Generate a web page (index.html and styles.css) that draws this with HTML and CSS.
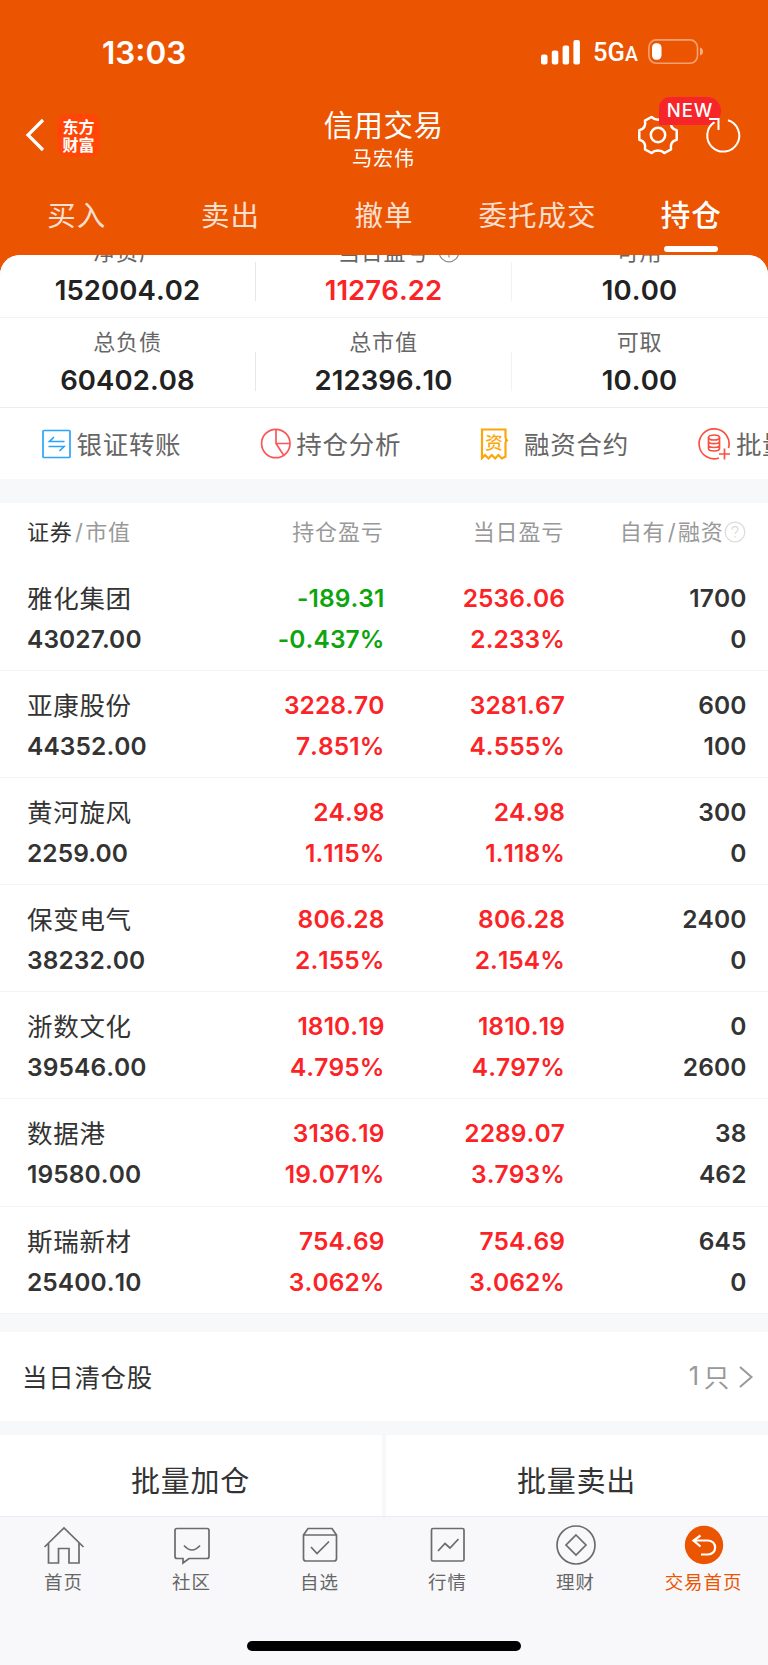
FILE: index.html
```html
<!DOCTYPE html>
<html lang="zh-CN">
<head>
<meta charset="utf-8">
<title>信用交易</title>
<link rel="stylesheet" href="styles.css">
</head>
<body>
<header class="top">
  <div class="status">
    <span class="time">13:03</span>
    <span class="status-right">
      <svg class="signal" width="40" height="25" viewBox="0 0 40 25" fill="#fff"><rect x="0" y="14.5" width="6.5" height="10" rx="2"/><rect x="10.8" y="10.5" width="6.5" height="14" rx="2"/><rect x="21.6" y="5.5" width="6.5" height="19" rx="2"/><rect x="32.4" y="0" width="6.5" height="24.5" rx="2"/></svg>
      <span class="net">5G<small>A</small></span>
      <svg class="battery" width="56" height="26" viewBox="0 0 56 26"><rect x=".9" y=".9" width="48.6" height="23.4" rx="7.5" fill="none" stroke="#fff" stroke-opacity=".45" stroke-width="1.6"/><path d="M52 8.5c2.6.8 3 2.4 3 4s-.4 3.200-3 4z" fill="#fff" fill-opacity=".5"/><rect x="4" y="4.300" width="9.500" height="16.500" rx="4.200" fill="#fff"/></svg>
    </span>
  </div>
  <div class="nav">
    <div class="nav-left">
      <svg width="20" height="34" viewBox="0 0 20 34" fill="none" stroke="#fff" stroke-width="3.200"><path d="M18 2L3 17l15 15"/></svg>
      <div class="logo"><span>东方</span><span>财富</span></div>
    </div>
    <div class="nav-title"><h1>信用交易</h1><p>马宏伟</p></div>
    <div class="nav-right">
      <svg class="gear" width="42" height="42" viewBox="-21 -21 42 42" fill="none" stroke="#fff" stroke-width="2.500" stroke-linejoin="round"><path d="M-6.500-18C-3-14.500 3-14.500 6.500-18L13-14.300C12-9 14-6 18.700-4.800V4.800C14 6 12 9 13 14.300L6.500 18C3 14.500-3 14.500-6.500 18L-13 14.300C-12 9-14 6-18.700 4.800V-4.800C-14-6-12-9-13-14.300Z"/><circle r="7.200"/></svg>
      <span class="badge">NEW</span>
      <svg class="refresh" width="40" height="40" viewBox="0 0 40 40" fill="none" stroke="#fff" stroke-width="2"><path d="M24 5.300A16 16 0 1 1 10.500 7.200"/><path d="M5 4H14.500V15"/></svg>
    </div>
  </div>
  <nav class="tabs"><a>买入</a><a>卖出</a><a>撤单</a><a>委托成交</a><a class="on">持仓</a></nav>
</header>

<main class="panel">
  <section class="summary">
    <div class="srow first">
      <div class="cell"><label>净资产</label><b>152004.02</b></div>
      <div class="cell"><label class="tip">当日盈亏<svg width="22" height="22" viewBox="0 0 22 22" fill="none" stroke="#888" stroke-width="1.200"><circle cx="11" cy="11" r="9.800"/><path d="M11 9.500v7M11 5v2"/></svg></label><b class="up">11276.22</b></div>
      <div class="cell"><label>可用</label><b>10.00</b></div>
    </div>
    <div class="srow">
      <div class="cell"><label>总负债</label><b>60402.08</b></div>
      <div class="cell"><label>总市值</label><b>212396.10</b></div>
      <div class="cell"><label>可取</label><b>10.00</b></div>
    </div>
  </section>
  <section class="tools">
    <div class="tool"><svg width="30" height="32" viewBox="0 0 30 32" fill="none" stroke="#2ba4fb" stroke-width="1.700"><rect x="1" y="2.500" width="27" height="27" rx="1"/><path d="M22.500 13.500H7.500l4.500-4.500M6.500 18.500h15.500l-4.500 4.500"/></svg><span>银证转账</span></div>
    <div class="tool"><svg width="31" height="32" viewBox="-1 0 31 32" fill="none" stroke="#fb5558" stroke-width="1.700"><circle cx="14.800" cy="15.500" r="14.200"/><path d="M15 1.500v14h14M15 15.500l7.500 11.500"/></svg><span>持仓分析</span></div>
    <div class="tool"><svg class="contract" width="30" height="34" viewBox="-1 0 30 34"><path d="M25.500 11V2.500H2V31l3-3 3.500 3.500 3.300-3.500 3.300 3.500 3.300-3.500 3.400 3.500 3.700-2V15" fill="none" stroke="#fba60a" stroke-width="2.200"/><path d="M25 9l3.500 4.500-3.500 3z" fill="#fba60a"/><text x="14" y="21.500" text-anchor="middle" class="zi">资</text></svg><span>融资合约</span></div>
    <div class="tool"><svg width="33" height="34" viewBox="0 0 33 34" fill="none" stroke="#fb5040" stroke-width="1.700"><path d="M21 31A15 15 0 1 1 30.500 21"/><ellipse cx="16" cy="10.500" rx="5.500" ry="2.500"/><path d="M10.500 10.500v11c0 3.300 11 3.300 11 0v-11M10.500 14.200c0 3.300 11 3.300 11 0M10.500 18c0 3.300 11 3.300 11 0M26.500 21.500v11M21 27h11"/></svg><span>批量交易</span></div>
  </section>

  <section class="holdings">
    <div class="thead"><div><em>证券</em><i>/</i>市值</div><div>持仓盈亏</div><div>当日盈亏</div><div class="own">自有<i>/</i>融资<svg width="22" height="22" viewBox="0 0 22 22" fill="none" stroke="#ddd" stroke-width="1.300"><circle cx="11" cy="11" r="9.800"/><path d="M8 8.500C8 4.500 14 4.500 14 8.500c0 2-3 2.500-3 4.500M11 15v1.500"/></svg></div></div>
    <div class="row"><div><span class="name">雅化集团</span><b class="kern">43027.00</b></div><div class="down"><b>-189.31</b><b>-0.437%</b></div><div class="up"><b>2536.06</b><b>2.233%</b></div><div><b>1700</b><b>0</b></div></div>
    <div class="row"><div><span class="name">亚康股份</span><b>44352.00</b></div><div class="up"><b>3228.70</b><b>7.851%</b></div><div class="up"><b>3281.67</b><b>4.555%</b></div><div><b>600</b><b>100</b></div></div>
    <div class="row"><div><span class="name">黄河旋风</span><b class="kern">2259.00</b></div><div class="up"><b>24.98</b><b>1.115%</b></div><div class="up"><b>24.98</b><b>1.118%</b></div><div><b>300</b><b>0</b></div></div>
    <div class="row"><div><span class="name">保变电气</span><b>38232.00</b></div><div class="up"><b>806.28</b><b>2.155%</b></div><div class="up"><b>806.28</b><b>2.154%</b></div><div><b>2400</b><b>0</b></div></div>
    <div class="row"><div><span class="name">浙数文化</span><b>39546.00</b></div><div class="up"><b>1810.19</b><b>4.795%</b></div><div class="up"><b>1810.19</b><b>4.797%</b></div><div><b>0</b><b>2600</b></div></div>
    <div class="row"><div><span class="name">数据港</span><b>19580.00</b></div><div class="up"><b>3136.19</b><b>19.071%</b></div><div class="up"><b>2289.07</b><b>3.793%</b></div><div><b>38</b><b>462</b></div></div>
    <div class="row"><div><span class="name">斯瑞新材</span><b>25400.10</b></div><div class="up"><b>754.69</b><b>3.062%</b></div><div class="up"><b>754.69</b><b>3.062%</b></div><div><b>645</b><b>0</b></div></div>
  </section>

  <section class="cleared"><span>当日清仓股</span><span class="count"><span class="n">1</span>只<svg width="16" height="24" viewBox="0 0 16 24" fill="none" stroke="#999" stroke-width="2"><path d="M2 2l11.500 10L2 22"/></svg></span></section>
  <section class="actions"><button>批量加仓</button><button>批量卖出</button></section>
</main>

<footer class="bottom">
  <div class="tabbar">
    <a><svg viewBox="-21 -21 42 42"><path d="M-19.500 2L0-17 19.500 2M-15.500-2V18H-5.500V3.500H5V18H15V-2"/></svg><span>首页</span></a>
    <a><svg viewBox="-21 -21 42 42"><path d="M-15-16.500H15Q17-16.500 17-14.500V11.500Q17 13.500 15 13.500H-3L-9 18V13.500H-15Q-17 13.500-17 11.500V-14.500Q-17-16.500-15-16.500ZM-8 .500Q0 9.500 8 .500"/></svg><span>社区</span></a>
    <a><svg viewBox="-21 -21 42 42"><path d="M-16.500-10L-12-16.500H12L16.500-10V13.500Q16.500 16 14 16H-14Q-16.500 16-16.500 13.500ZM-16.500-10H16.500M-9 2L-3 8.500 9-3.500"/></svg><span>自选</span></a>
    <a><svg viewBox="-21 -21 42 42"><rect x="-16.500" y="-16.500" width="32.500" height="32.500" rx="1.500"/><path d="M-10 6L-3-1.500 2 3 10.500-6"/></svg><span>行情</span></a>
    <a><svg viewBox="-21 -21 42 42"><circle r="19"/><path d="M0-10L10 0 0 10-10 0Z"/></svg><span>理财</span></a>
    <a class="on"><svg viewBox="-21 -21 42 42"><circle class="disc" r="19.200"/><path class="arrow" d="M-3.500-9.500L-10.500-4.500-3.500 1.500M-10.500-4.500H4C13.500-4.500 13.500 9.500 4 9.500H-3"/></svg><span>交易首页</span></a>
  </div>
  <div class="home"></div>
</footer>
</body>
</html>
```
FILE: styles.css
```css
* { box-sizing: border-box; }
body {
  margin: 0;
  width: 768px;
  height: 1665px;
  overflow: hidden;
  background: #eb5502;
  color: #333;
  font-family: Inter, "Noto Sans CJK SC", sans-serif;
}
h1, p { margin: 0; font-weight: 400; }
b { font-weight: 600; font-kerning: none; }
.kern { font-kerning: normal; }
i, em { font-style: normal; }
svg { display: block; flex: none; }
.up { color: #fc2326; }
.down { color: #0da50d; }

.top { height: 255px; color: #fff; display: flex; flex-direction: column; }
.status { height: 104px; padding: 0 64px 0 102px; display: flex; justify-content: space-between; align-items: center; }
.time { font-size: 31.500px; font-weight: 600; padding-top: 1px; }
.status-right { display: flex; align-items: center; }
.net { width: 55px; margin: 3px 0 0 12px; font: 500 25.500px/26px Roboto, sans-serif; white-space: nowrap; }
.net small { font-size: 19.500px; }
.nav { height: 73px; display: grid; grid-template-columns: 1fr 300px 1fr; }
.nav-left { display: flex; align-items: center; padding: 0 0 11px 25px; }
.logo {
  width: 43px; height: 43px; margin-left: 12px; border-radius: 10px; background: #ff4606;
  display: flex; flex-direction: column; align-items: center; justify-content: center;
  padding-bottom: 1px;
  font: 700 16px/18px "Noto Sans CJK SC", sans-serif;
}
.nav-title { text-align: center; padding-top: 1px; }
.nav-title h1 { font-size: 29.500px; line-height: 41px; letter-spacing: .4px; margin-left: -1px; }
.nav-title p { font-size: 20px; line-height: 27px; letter-spacing: 1px; margin-left: -1px; }
.nav-right { position: relative; display: flex; align-items: center; padding: 0 0 11px 103px; }
.badge {
  position: absolute; left: 125px; top: -7px; width: 62px; height: 28px;
  border-radius: 11px 14px 14px 0; background: #f62529;
  font-size: 18.500px; line-height: 27px; font-weight: 500; letter-spacing: 1px; text-align: center;
}
.refresh { position: relative; margin-left: 24.500px; }
.tabs { flex: 1; display: grid; grid-template-columns: repeat(5, 1fr); }
.tabs a { display: flex; flex-direction: column; align-items: center; font-size: 28.500px; line-height: 78px; letter-spacing: 1px; color: rgba(255,255,255,.82); }
.tabs .on { color: #fff; font-size: 29.500px; line-height: 77px; font-weight: 500; }
.tabs .on::after { content: ""; width: 54px; height: 5.500px; margin-top: -8px; border-radius: 3px; background: #fff; }

.panel { height: 1261px; overflow: hidden; border-radius: 20px 20px 0 0; background: #f7f8fa; }
.summary, .tools, .holdings, .cleared { background: #fff; }
.srow { height: 90px; display: grid; grid-template-columns: repeat(3, 1fr); border-bottom: 1px solid #ededef; }
.srow.first { margin-top: -27px; border-bottom-color: #f3f3f5; }
.cell { display: flex; flex-direction: column; align-items: center; padding-right: 1px; background: linear-gradient(#e8e8e8, #e8e8e8) right 34px / 1px 39px no-repeat; }
.cell:nth-child(2) { background-image: linear-gradient(#f2f2f3, #f2f2f3); }
.cell:last-child { background: none; }
.cell label { font-size: 22px; line-height: 38px; margin-top: 5px; letter-spacing: .8px; color: #666; }
.cell b { font-size: 27.500px; line-height: 38px; letter-spacing: .1px; color: #222; }
.cell b.up { color: #fc2326; }
.tip { display: flex; align-items: center; }
.tip svg { margin: 0 -31px 0 9px; }
.tools { height: 71px; padding-left: 41.500px; display: flex; overflow: hidden; }
.tool { width: 218.800px; flex: none; display: flex; align-items: center; font-size: 25.500px; letter-spacing: .7px; color: #666; }
.tool span { margin: -3px 0 0 5px; }
.tool .contract + span { margin-left: 15px; }
.zi { font: 500 17.500px "Noto Sans CJK SC", sans-serif; letter-spacing: 0; fill: #fba60a; }

.holdings { margin-top: 24px; }
.thead, .row { display: grid; grid-template-columns: 204.500px 1fr 180.500px 181.500px; padding: 0 21.500px 0 27px; text-align: right; }
.thead > :first-child, .row > :first-child { text-align: left; }
.thead { height: 60.500px; line-height: 58px; font-size: 22px; letter-spacing: .8px; color: #999; }
.thead > div:not(:first-child) { padding-right: 1px; }
.thead em { color: #333; }
.thead i { margin: 0 1.300px 0 2.500px; }
.own { display: flex; align-items: center; justify-content: flex-end; height: 58px; white-space: nowrap; }
.row { height: 107.200px; padding-top: 14px; border-bottom: 1px solid #f3f4f5; }
.row > div { display: flex; flex-direction: column; }
.row b { font-size: 24.500px; line-height: 41px; letter-spacing: .1px; }
.row .name { font-size: 25.500px; line-height: 41px; height: 41px; letter-spacing: .7px; }

.cleared { height: 89px; margin-top: 18.500px; padding: 0 14px 3px 22px; display: flex; justify-content: space-between; align-items: center; font-size: 25.500px; letter-spacing: .7px; }
.count { display: flex; align-items: center; color: #999; }
.count .n { margin-right: 4px; }
.count svg { margin: 3px 0 0 8px; }
.actions { height: 82px; margin-top: 14px; display: grid; grid-template-columns: 1fr 1fr; gap: 4px; }
.actions button { border: 0; background: #fff; color: #333; font: 400 29px/76px Inter, "Noto Sans CJK SC", sans-serif; letter-spacing: .8px; padding: 9px 1px 0 0; }

.bottom { height: 149px; background: #f8f8fb; border-top: 1px solid #eaebf0; }
.tabbar { height: 124px; display: grid; grid-template-columns: repeat(6, 1fr); }
.tabbar a { display: flex; flex-direction: column; align-items: center; padding-top: 7px; font-size: 18.500px; line-height: 32px; letter-spacing: .9px; color: #666; }
.tabbar span { margin-left: -1px; }
.tabbar svg { width: 42px; height: 42px; fill: none; stroke: #6b6b6b; stroke-width: 1.700; }
.tabbar .on { color: #eb5502; }
.tabbar .disc { fill: #eb5502; stroke: none; }
.tabbar .arrow { stroke: #fff; stroke-width: 2.200; }
.home { width: 274px; height: 10px; margin: 0 auto; border-radius: 5px; background: #000; }
```
